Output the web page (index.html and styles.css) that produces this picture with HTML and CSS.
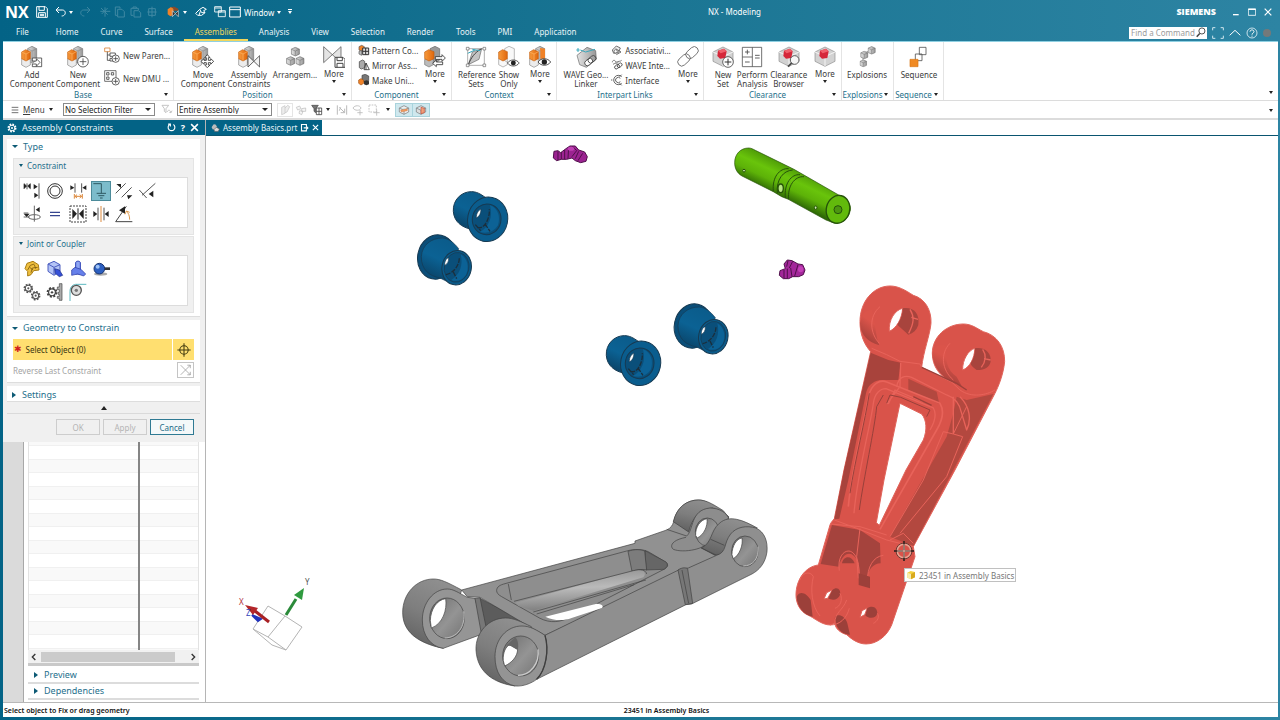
FILE: index.html
```html
<!DOCTYPE html>
<html lang="en">
<head>
<meta charset="utf-8">
<title>NX - Modeling</title>
<link rel="stylesheet" href="styles.css">
</head>
<body>
<svg class="defs" aria-hidden="true">
  <defs>
    <linearGradient id="gOrange" x1="0" x2="1"><stop offset="0" stop-color="#f79a3c"/><stop offset="1" stop-color="#e0670c"/></linearGradient>
    <linearGradient id="gGrey" x1="0" x2="1"><stop offset="0" stop-color="#e4e4e4"/><stop offset="1" stop-color="#969696"/></linearGradient>
    <symbol id="cubes" viewBox="0 0 66 66">
      <path d="M20 8 33 1 47 8V42L34 52 20 44Z" fill="url(#gGrey)" stroke="#777" stroke-width="2"/>
      <path d="M20 8 33 15 47 8M33 15V50" fill="none" stroke="#888" stroke-width="2"/>
      <path d="M2 38 14 32 28 38V57L15 64 2 57Z" fill="#ececec" stroke="#888" stroke-width="2"/>
      <path d="M2 18 14 11 28 17V38L15 45 2 38Z" fill="url(#gOrange)" stroke="#c45f10" stroke-width="2"/>
      <path d="M2 18 15 24 28 17M15 24V44" fill="none" stroke="#ffb767" stroke-width="2"/>
    </symbol>
    <symbol id="redcube" viewBox="0 0 66 66">
      <path d="M3 18 33 3 63 18V46L33 61 3 46Z" fill="#d2d2d2" stroke="#8b8b8b" stroke-width="2"/>
      <path d="M3 18 33 32 63 18M33 32V60" fill="none" stroke="#f4f4f4" stroke-width="3"/>
      <path d="M18 14 36 8 44 16 40 36 24 38 16 30Z" fill="#d5273a"/><path d="M18 14 36 8 44 16 26 22Z" fill="#f0606c"/>
    </symbol>
    <symbol id="i-add" viewBox="0 0 66 66"><use href="#cubes" width="66" height="66"/><path d="M34 36H62V62H34V54H46V61L57 49 46 38V45H34Z" fill="#fff" stroke="#444" stroke-width="2.5"/></symbol>
    <symbol id="i-new" viewBox="0 0 66 66"><use href="#cubes" width="66" height="66"/><circle cx="48" cy="47" r="16" fill="#fff" stroke="#444" stroke-width="2.5"/><path d="M48 37V57M38 47H58" stroke="#444" stroke-width="2.5"/></symbol>
    <symbol id="i-move" viewBox="0 0 66 66"><use href="#cubes" width="66" height="66"/><path d="M46 26 54 35H49V43H56V38L65 46 56 55V50H49V57H54L46 65 38 57H43V50H36V55L27 46 36 38V43H43V35H38Z" fill="#fff" stroke="#333" stroke-width="2.5"/></symbol>
    <symbol id="i-con" viewBox="0 0 66 66"><use href="#cubes" width="66" height="66"/><path d="M30 29V63L65 29V63Z" fill="#f2f2f2" stroke="#444" stroke-width="2.5"/></symbol>
    <symbol id="hexc" viewBox="0 0 30 32"><path d="M2 8 15 2 28 8V24L15 30 2 24Z" fill="url(#gGrey)" stroke="#666" stroke-width="2"/><path d="M2 8 15 14 28 8M15 14V29" fill="none" stroke="#777" stroke-width="2"/></symbol>
    <symbol id="i-arr" viewBox="0 0 66 66"><use href="#hexc" x="20" y="2" width="28" height="30"/><use href="#hexc" x="6" y="30" width="28" height="30"/><use href="#hexc" x="34" y="30" width="28" height="30"/></symbol>
    <symbol id="i-bow" viewBox="0 0 66 66"><path d="M2 2V50L54 2V50Z" fill="#e4e4e4" stroke="#666" stroke-width="2.5"/><path d="M36 34H60L66 40V64H36Z" fill="#fff" stroke="#444" stroke-width="3"/><path d="M42 34V44H58V34M42 64V52H60V64" fill="none" stroke="#444" stroke-width="3"/></symbol>
    <symbol id="i-swap" viewBox="0 0 66 66"><path d="M18 8 33 1 47 8V42L34 52 20 44Z" fill="#9a9a9a" stroke="#666" stroke-width="2"/><path d="M2 40 14 34 28 40V56L15 63 2 56Z" fill="#bbb" stroke="#777" stroke-width="2"/><path d="M2 18 14 11 30 17V38L15 45 2 38Z" fill="url(#gOrange)" stroke="#c45f10" stroke-width="2"/><path d="M64 36 54 26V32H34V40H54V46ZM26 52 37 42V48H56V56H37V62Z" fill="#fff" stroke="#333" stroke-width="2.5"/></symbol>
    <symbol id="i-ref" viewBox="0 0 66 66"><path d="M10 56 22 18 50 8 42 40Z" fill="#c4c4c4" stroke="#666" stroke-width="2"/><path d="M10 56C18 36 28 20 50 8" fill="none" stroke="#444" stroke-width="3"/><path d="M8 8H58V58H8Z" fill="none" stroke="#888" stroke-width="2"/><path d="M4 4h8v8H4zM54 4h8v8h-8zM4 54h8v8H4zM54 54h8v8h-8z" fill="#fff" stroke="#666" stroke-width="2"/><path d="M8 22 30 12M22 10 46 14" stroke="#3aa9bd" stroke-width="3"/></symbol>
    <symbol id="eye" viewBox="0 0 40 28"><path d="M1 14C10 1 30 1 39 14 30 27 10 27 1 14Z" fill="#fff" stroke="#333" stroke-width="2.5"/><circle cx="20" cy="14" r="8" fill="#222"/></symbol>
    <symbol id="i-show" viewBox="0 0 66 66"><path d="M20 8 33 1 49 8V42L34 52 20 44ZM2 38 14 32 28 38V56L15 63 2 56Z" fill="#f8f8f8" stroke="#999" stroke-width="2"/><path d="M2 18 14 11 28 17V38L15 45 2 38Z" fill="url(#gOrange)" stroke="#c45f10" stroke-width="2"/><use href="#eye" x="26" y="38" width="40" height="26"/></symbol>
    <symbol id="i-more2" viewBox="0 0 66 66"><use href="#cubes" width="66" height="66"/><path d="M33 6 48 8V38L34 38V15Z" fill="#f08228"/><use href="#eye" x="26" y="34" width="40" height="28"/></symbol>
    <symbol id="i-wave" viewBox="0 0 66 66"><path d="M6 28 36 4 62 14 64 40 34 64 14 56Z" fill="url(#gGrey)" stroke="#666" stroke-width="2"/><path d="M4 12H14M9 6V18M16 12 32 18 60 10" fill="none" stroke="#3aa9bd" stroke-width="3"/><rect x="28" y="40" width="26" height="16" rx="8" transform="rotate(-40 41 48)" fill="#fff" stroke="#444" stroke-width="2.5"/><rect x="38" y="32" width="26" height="16" rx="8" transform="rotate(-40 51 40)" fill="none" stroke="#444" stroke-width="2.5"/></symbol>
    <symbol id="i-link" viewBox="0 0 66 66"><rect x="0" y="30" width="42" height="24" rx="12" transform="rotate(-42 21 42)" fill="none" stroke="#666" stroke-width="2.5"/><rect x="24" y="8" width="42" height="24" rx="12" transform="rotate(-42 45 20)" fill="none" stroke="#666" stroke-width="2.5"/></symbol>
    <symbol id="i-nset" viewBox="0 0 66 66"><use href="#redcube" width="66" height="66"/><circle cx="48" cy="48" r="16" fill="#fff" stroke="#444" stroke-width="2.5"/><path d="M48 38V58M38 48H58" stroke="#333" stroke-width="3"/></symbol>
    <symbol id="i-perf" viewBox="0 0 66 66"><path d="M4 4H62V62H4ZM34 4V62M4 33H34" fill="#fff" stroke="#555" stroke-width="2.5"/><path d="M12 18H26M19 11V25M12 48H26M42 28H56M42 36H56" stroke="#444" stroke-width="2.5"/></symbol>
    <symbol id="i-clr" viewBox="0 0 66 66"><use href="#redcube" width="66" height="66"/><circle cx="50" cy="42" r="13" fill="#f6f6f6" stroke="#444" stroke-width="2.5"/><path d="M41 51 30 62" stroke="#444" stroke-width="5"/></symbol>
    <symbol id="i-exp" viewBox="0 0 66 66"><path d="M46 10 22 24 20 52" fill="none" stroke="#777" stroke-width="2"/><use href="#hexc" x="34" y="0" width="26" height="26"/><use href="#hexc" x="12" y="14" width="26" height="26"/><use href="#hexc" x="10" y="40" width="24" height="24"/></symbol>
    <symbol id="i-seq" viewBox="0 0 66 66"><path d="M34 4H54V26H34ZM22 24H42V44H22Z" fill="#fff" stroke="#555" stroke-width="2.5"/><path d="M6 40H30V62H6Z" fill="#f08a24" stroke="#d8730f" stroke-width="2"/></symbol>
    <symbol id="s-par" viewBox="0 0 48 48"><path d="M2 3H18V14H2Z" fill="#fff" stroke="#d98239" stroke-width="2.5"/><path d="M10 14V40H18M10 24H18M18 18H34V28H18ZM18 34H28V42H18Z" fill="none" stroke="#444" stroke-width="2.5"/><circle cx="35" cy="35" r="11" fill="#fff" stroke="#444" stroke-width="2.5"/><path d="M35 28V42M28 35H42" stroke="#444" stroke-width="2.5"/></symbol>
    <symbol id="s-dmu" viewBox="0 0 48 48"><path d="M2 2H36V34H2Z" fill="#fff" stroke="#555" stroke-width="2.5"/><path d="M8 8H15V15H8ZM22 8H29V15H22ZM8 21H15V28H8Z" fill="none" stroke="#444" stroke-width="2.5"/><circle cx="35" cy="34" r="11" fill="#fff" stroke="#444" stroke-width="2.5"/><path d="M35 27V41M28 34H42" stroke="#444" stroke-width="2.5"/></symbol>
    <symbol id="s-pat" viewBox="0 0 36 36"><path d="M3 8 11 4 19 8V18L11 22 3 18Z" fill="#f08228" stroke="#555" stroke-width="2"/><path d="M3 22 11 19V34L3 30Z" fill="#bbb" stroke="#555" stroke-width="2"/><path d="M14 12H32V32H14ZM23 12V32M14 22H32" fill="#ddd" stroke="#333" stroke-width="3"/></symbol>
    <symbol id="s-mir" viewBox="0 0 36 36"><path d="M4 8 14 3 20 7V26L10 30 4 26Z" fill="#aaa" stroke="#555" stroke-width="2.5"/><path d="M18 32 24 12 34 32ZM24 12V32" fill="#fff" stroke="#333" stroke-width="2.5"/></symbol>
    <symbol id="s-uni" viewBox="0 0 36 36"><path d="M12 4 22 1 32 6V20L22 24 12 20Z" fill="#777" stroke="#444" stroke-width="2"/><path d="M2 18 9 14 17 18V28L9 33 2 28Z" fill="#f08228" stroke="#a35310" stroke-width="2"/><path d="M18 22 25 19 33 22V31L25 34 18 31Z" fill="#333"/></symbol>
    <symbol id="s-ass" viewBox="0 0 36 36"><path d="M4 18 16 6 28 12 22 26 8 28ZM14 14 30 24M16 32 30 24" fill="#eee" stroke="#555" stroke-width="2.5"/><circle cx="14" cy="22" r="5" fill="#fff" stroke="#444" stroke-width="2"/></symbol>
    <symbol id="s-wav" viewBox="0 0 36 36"><path d="M4 10C4 2 14 2 14 10 22 6 28 8 32 4M6 16C10 12 18 14 22 10" fill="none" stroke="#666" stroke-width="2.5"/><rect x="10" y="18" width="16" height="10" rx="5" transform="rotate(-40 18 23)" fill="#fff" stroke="#444" stroke-width="2.5"/><rect x="18" y="14" width="16" height="10" rx="5" transform="rotate(-40 26 19)" fill="none" stroke="#444" stroke-width="2.5"/></symbol>
    <symbol id="s-int" viewBox="0 0 36 36"><path d="M32 8A14 14 0 1 0 32 28M28 13A8 8 0 1 0 28 23" fill="none" stroke="#444" stroke-width="2.5"/><path d="M26 8 32 2M26 28 32 34M4 18H0" stroke="#444" stroke-width="2.5"/></symbol>
    <symbol id="gear" viewBox="0 0 30 30"><circle cx="15" cy="15" r="11" fill="none" stroke="currentColor" stroke-width="5" stroke-dasharray="5 3.6"/><circle cx="15" cy="15" r="8.5" fill="none" stroke="currentColor" stroke-width="3"/><circle cx="15" cy="15" r="3" fill="currentColor"/></symbol>
    <linearGradient id="gWall" x1="0" x2="1" y1="0" y2="1"><stop offset="0" stop-color="#6c6c6c"/><stop offset=".55" stop-color="#949494"/><stop offset="1" stop-color="#747474"/></linearGradient>
    <linearGradient id="gSide" x1=".6" x2=".2" y1="0" y2="1"><stop offset="0" stop-color="#8f8f8f"/><stop offset=".5" stop-color="#7e7e7e"/><stop offset="1" stop-color="#5f5f5f"/></linearGradient>
    <linearGradient id="gFillet" x1="0" x2=".15" y1="0" y2="1"><stop offset="0" stop-color="#8c8c8c"/><stop offset=".5" stop-color="#bababa"/><stop offset="1" stop-color="#808080"/></linearGradient>
    <linearGradient id="gGreen" gradientUnits="userSpaceOnUse" x1="200" y1="75" x2="160" y2="160"><stop offset="0" stop-color="#4f9c08"/><stop offset=".35" stop-color="#69c40b"/><stop offset=".65" stop-color="#5db208"/><stop offset="1" stop-color="#2f6a05"/></linearGradient>
    <linearGradient id="gBlue" x1=".7" x2=".3" y1="0" y2="1"><stop offset="0" stop-color="#0b5b8a"/><stop offset=".5" stop-color="#0b6294"/><stop offset="1" stop-color="#0a4063"/></linearGradient>
    <linearGradient id="gRedSide" x1=".6" x2=".2" y1="0" y2="1"><stop offset=".3" stop-color="#db544a"/><stop offset="1" stop-color="#963b36"/></linearGradient>
    <g id="bushFront" stroke="#173a52" stroke-width="3">
      <path d="M190 214C188 180 214 155 244 155 258 155 270 160 288 174L244 268C215 262 192 245 190 214Z" fill="url(#gBlue)"/>
      <ellipse cx="293" cy="238" rx="60" ry="67" transform="rotate(12 293 238)" fill="#0a5d8e"/>
      <ellipse cx="290" cy="238" rx="43" ry="46" transform="rotate(12 290 238)" fill="#0a4f7a"/>
      <path d="M300 196C325 204 332 232 324 256 312 276 290 282 270 276 296 262 310 232 300 196Z" fill="#0c6296" stroke="none"/>
      <path d="M259 234C258 220 268 208 273 208 273 220 268 230 259 234Z" fill="#fff" stroke-width="2"/>
      <path d="M262 262C280 270 300 240 298 208M285 252 300 274M256 254 272 272" fill="none" stroke="#1b2f3d" stroke-width="4" stroke-dasharray="14 4"/>
    </g>
    <g id="bushBack" stroke="#173a52" stroke-width="3">
      <ellipse cx="140" cy="351" rx="57" ry="67" transform="rotate(12 140 351)" fill="#0a4e79"/>
      <path d="M94 350C96 315 124 294 158 294 176 296 190 306 206 326L170 424 150 414C118 408 94 390 94 350Z" fill="url(#gBlue)" stroke-width="2"/>
      <ellipse cx="200" cy="383" rx="44" ry="52" transform="rotate(12 200 383)" fill="#0a5b8b"/>
      <ellipse cx="200" cy="382" rx="37" ry="45" transform="rotate(12 200 382)" fill="#0a4f7a" stroke-width="2"/>
      <path d="M212 343C234 356 238 384 228 404 216 422 200 426 184 420 210 404 220 374 212 343Z" fill="#0c6296" stroke="none"/>
      <path d="M164 376C163 364 170 353 176 353 177 364 172 373 164 376Z" fill="#fff" stroke-width="2"/>
      <path d="M168 404C188 400 208 380 208 352M190 396 200 416" fill="none" stroke="#1b2f3d" stroke-width="4" stroke-dasharray="14 4"/>
    </g>
  </defs>
</svg>

<div class="app">
  <header class="titlebar">
    <strong class="logo">NX</strong>
    <div class="quick">
      <button aria-label="Save" class="qb q-save"><svg viewBox="0 0 36 36"><path d="M2 2H28L34 8V34H2ZM9 2V13H25V2M8 34V20H28V34M12 25H24M12 29H24" fill="none" stroke="#fff" stroke-width="3"/></svg></button>
      <button aria-label="Undo" class="qb q-undo"><svg viewBox="0 0 36 36"><path d="M12 3 3 12 12 21M4 12H22C34 12 34 30 20 30" fill="none" stroke="#fff" stroke-width="3"/></svg></button>
      <i class="tri light"></i>
      <button aria-label="Redo" class="qb q-redo dim"><svg viewBox="0 0 36 36"><path d="M24 3 33 12 24 21M32 12H14C2 12 2 30 16 30" fill="none" stroke="#fff" stroke-width="3"/></svg></button>
      <button aria-label="Cut" class="qb q-cut dim"><svg viewBox="0 0 36 36"><path d="M6 6 26 26M26 6 8 24M4 16H34M18 4V32" fill="none" stroke="#fff" stroke-width="3"/></svg></button>
      <button aria-label="Copy" class="qb dim"><svg viewBox="0 0 36 36"><path d="M4 3H18V8M4 3V28H10M11 10H24L31 17V33H11Z" fill="none" stroke="#fff" stroke-width="3"/></svg></button>
      <button aria-label="Paste" class="qb dim"><svg viewBox="0 0 36 36"><path d="M10 28H3V7H25V12M9 7V3H19V7M12 14H25L32 20V33H12Z" fill="none" stroke="#fff" stroke-width="3"/></svg></button>
      <button aria-label="Repeat" class="qb dim"><svg viewBox="0 0 36 36"><path d="M18 2V34M4 18H32M8 8H28V28H8Z" fill="none" stroke="#fff" stroke-width="3"/></svg></button>
      <button aria-label="Component" class="qb q-comp"><svg viewBox="0 0 36 36"><path d="M2 10 12 3 20 8V26L10 31 2 25Z" fill="#f08228"/><path d="M12 3 22 2 34 8V14H20V8Z" fill="#8a4a2a"/><path d="M16 14V32L25 23 34 32V14L25 23Z" fill="#333" stroke="#ddd" stroke-width="2"/></svg></button>
      <i class="tri light"></i>
      <button aria-label="Touch" class="qb q-touch"><svg viewBox="0 0 36 36"><path d="M2 22 14 10 24 4 34 10 26 14 30 20 20 28 8 28ZM14 10 20 20 30 20M12 28 16 16" fill="none" stroke="#fff" stroke-width="3"/></svg></button>
      <button aria-label="Cascade" class="qb q-cas"><svg viewBox="0 0 36 36"><path d="M2 2H22V18H2ZM2 6H22M13 14H34V32H13ZM13 18H34" fill="#12708f" stroke="#fff" stroke-width="2.5"/></svg></button>
      <button class="qb q-win"><svg viewBox="0 0 36 36"><path d="M2 3H34V33H2ZM2 11H34" fill="none" stroke="#fff" stroke-width="3"/></svg>Window <i class="tri light"></i></button>
      <i class="tri light bar"></i>
    </div>
    <h1 class="apptitle">NX - Modeling</h1>
    <div class="winctl">
      <strong class="siemens">SIEMENS</strong>
      <button aria-label="Minimize"><svg viewBox="0 0 24 24"><path d="M3 20H20" stroke="#fff" stroke-width="4"/></svg></button>
      <button aria-label="Maximize"><svg viewBox="0 0 24 24"><path d="M1 3H23V22H1Z" fill="none" stroke="#fff" stroke-width="2.5"/><path d="M1 4H23" stroke="#fff" stroke-width="4"/></svg></button>
      <button aria-label="Close"><svg viewBox="0 0 24 24"><path d="M2 2 22 22M22 2 2 22" stroke="#fff" stroke-width="3.5"/></svg></button>
    </div>
  </header>

  <div class="tabrow">
    <nav class="tabs">
      <button class="file">File</button><button>Home</button><button>Curve</button><button>Surface</button><button class="on">Assemblies</button><button>Analysis</button><button>View</button><button>Selection</button><button>Render</button><button>Tools</button><button>PMI</button><button>Application</button>
    </nav>
    <div class="find">
      <label class="search"><input type="text" placeholder="Find a Command" aria-label="Find a Command"><svg viewBox="0 0 36 36"><circle cx="21" cy="13" r="10" fill="#fff" stroke="#444" stroke-width="3"/><path d="M14 21 4 32" stroke="#444" stroke-width="5"/></svg></label>
      <button aria-label="Full screen"><svg viewBox="0 0 36 36"><path d="M2 10V2H10M26 2H34V10M34 26V34H26M10 34H2V26" fill="none" stroke="#cfe6ee" stroke-width="3"/></svg></button>
      <button aria-label="Minimize ribbon"><svg viewBox="0 0 36 36"><path d="M2 25 18 10 34 25" fill="none" stroke="#fff" stroke-width="3"/></svg></button>
      <button aria-label="Help"><svg viewBox="0 0 36 36"><circle cx="18" cy="18" r="15" fill="none" stroke="#e6f2f6" stroke-width="2.5"/><path d="M12 14C12 7 24 7 24 14 24 18 18 18 18 23M18 26V29" fill="none" stroke="#fff" stroke-width="3"/></svg></button>
      <i class="dot"></i>
    </div>
  </div>

  <section class="ribbon">
    <div class="group g-base">
      <div class="items">
        <button class="big w46"><svg><use href="#i-add"/></svg>Add<br>Component</button>
        <button class="big w46"><svg><use href="#i-new"/></svg>New<br>Component</button>
        <div class="list two"><button><svg><use href="#s-par"/></svg>New Paren...</button><button><svg><use href="#s-dmu"/></svg>New DMU ...</button></div>
      </div>
      <footer>Base<i class="tri corner"></i></footer>
    </div>
    <div class="group g-pos">
      <div class="items">
        <button class="big w46"><svg><use href="#i-move"/></svg>Move<br>Component</button>
        <button class="big w46"><svg><use href="#i-con"/></svg>Assembly<br>Constraints</button>
        <button class="big w46"><svg><use href="#i-arr"/></svg>Arrangem...</button>
        <button class="big more w32"><svg><use href="#i-bow"/></svg>More<i class="tri"></i></button>
      </div>
      <footer>Position<i class="tri corner"></i></footer>
    </div>
    <div class="group g-comp">
      <div class="items">
        <div class="list"><button><svg><use href="#s-pat"/></svg>Pattern Co...</button><button><svg><use href="#s-mir"/></svg>Mirror Ass...</button><button><svg><use href="#s-uni"/></svg>Make Uni...</button></div>
        <button class="big more w32"><svg><use href="#i-swap"/></svg>More<i class="tri"></i></button>
      </div>
      <footer>Component<i class="tri corner"></i></footer>
    </div>
    <div class="group g-ctx">
      <div class="items">
        <button class="big w36"><svg><use href="#i-ref"/></svg>Reference<br>Sets</button>
        <button class="big w30"><svg><use href="#i-show"/></svg>Show<br>Only</button>
        <button class="big more w32"><svg><use href="#i-more2"/></svg>More<i class="tri"></i></button>
      </div>
      <footer>Context<i class="tri corner"></i></footer>
    </div>
    <div class="group g-link">
      <div class="items">
        <button class="big w46"><svg><use href="#i-wave"/></svg>WAVE Geo...<br>Linker</button>
        <div class="list"><button><svg><use href="#s-ass"/></svg>Associativi...</button><button><svg><use href="#s-wav"/></svg>WAVE Inte...</button><button><svg><use href="#s-int"/></svg>Interface</button></div>
        <button class="big more w30"><svg><use href="#i-link"/></svg>More<i class="tri"></i></button>
      </div>
      <footer>Interpart Links<i class="tri corner"></i></footer>
    </div>
    <div class="group g-clr">
      <div class="items">
        <button class="big w26"><svg><use href="#i-nset"/></svg>New<br>Set</button>
        <button class="big w32"><svg><use href="#i-perf"/></svg>Perform<br>Analysis</button>
        <button class="big w40"><svg><use href="#i-clr"/></svg>Clearance<br>Browser</button>
        <button class="big more w32"><svg><use href="#redcube"/></svg>More<i class="tri"></i></button>
      </div>
      <footer>Clearance<i class="tri corner"></i></footer>
    </div>
    <div class="group g-exp">
      <div class="items"><button class="big w46"><svg><use href="#i-exp"/></svg>Explosions</button></div>
      <footer>Explosions<i class="tri corner"></i></footer>
    </div>
    <div class="group g-seq">
      <div class="items"><button class="big w46"><svg><use href="#i-seq"/></svg>Sequence</button></div>
      <footer>Sequence<i class="tri corner"></i></footer>
    </div>
    <i class="tri endtri"></i>
  </section>

  <section class="filterbar">
    <button class="menu"><svg viewBox="0 0 24 24"><path d="M2 4H22M2 12H22M2 20H22" stroke="#555" stroke-width="2.5"/></svg><span><u>M</u>enu</span><i class="tri"></i></button>
    <span class="sel s1"><select aria-label="Selection filter"><option>No Selection Filter</option></select><i class="tri"></i></span>
    <svg class="fi dimg" viewBox="0 0 36 36"><path d="M3 4H23L15 14V26L10 22V14ZM18 24C22 16 28 18 30 26M30 26 25 25M30 26 33 20" fill="none" stroke="#777" stroke-width="2.5"/></svg>
    <span class="sel s2"><select aria-label="Selection scope"><option>Entire Assembly</option></select><i class="tri"></i></span>
    <div class="ficons">
      <svg class="fi boxed dimg" viewBox="0 0 36 36"><path d="M8 10 18 5V28L8 32ZM18 12 26 4 32 8 24 24 18 26" fill="#ddd" stroke="#888" stroke-width="2"/></svg>
      <svg class="fi dimg" viewBox="0 0 36 36"><path d="M4 10 14 6 18 14 8 18ZM20 14 32 12 32 22 20 22ZM14 20 24 22 20 32 12 28Z" fill="#eee" stroke="#777" stroke-width="2"/></svg>
      <svg class="fi" viewBox="0 0 36 36"><path d="M2 4H22L14 14V26L9 22V14Z" fill="#777" stroke="#444" stroke-width="2"/><path d="M16 12H32V32H16ZM24 12V32M16 22H32" fill="#fff" stroke="#444" stroke-width="2.5"/></svg>
      <i class="tri gap"></i>
      <svg class="fi dimg" viewBox="0 0 36 36"><path d="M4 4V32M32 4V32M10 10 26 26M26 14V26H14M10 20 14 10" fill="none" stroke="#777" stroke-width="3"/></svg>
      <svg class="fi dimg" viewBox="0 0 36 36"><path d="M3 12C8 3 24 3 27 12 24 21 8 21 3 12ZM24 18V34M16 26H32" fill="none" stroke="#777" stroke-width="2.5"/></svg>
      <svg class="fi dimg" viewBox="0 0 36 36"><path d="M3 3H25V24H3Z" fill="none" stroke="#777" stroke-width="2.5" stroke-dasharray="5 3"/><path d="M26 17V35M17 26H35" stroke="#777" stroke-width="2.5"/></svg>
      <i class="tri wide"></i>
      <span class="tog"><svg viewBox="0 0 36 36"><path d="M4 12 18 5 32 12V24L18 31 4 24ZM4 12 18 19 32 12M18 19V31" fill="#eee" stroke="#777" stroke-width="2"/><path d="M8 18 28 14V20L10 24Z" fill="#f09a60" stroke="#c9703a"/></svg></span>
      <span class="tog"><svg viewBox="0 0 36 36"><path d="M4 12 18 5 32 12V24L18 31 4 24ZM4 12 18 19 32 12M18 19V31" fill="#ddd" stroke="#777" stroke-width="2"/><path d="M18 10 28 13V26L18 29Z" fill="#f0a07a" stroke="#c9503a" stroke-width="2"/></svg></span>
    </div>
    <i class="tri endtri"></i>
  </section>

  <main class="work">
    <aside class="side">
      <section class="dialog">
        <header><svg class="gearw"><use href="#gear"/></svg><h2>Assembly Constraints</h2>
          <button aria-label="Reset"><svg viewBox="0 0 24 24"><path d="M7 4A9 9 0 1 0 17 4M3 3H9V9" fill="none" stroke="#fff" stroke-width="3"/></svg></button>
          <button aria-label="Help" class="q">?</button>
          <button aria-label="Close"><svg viewBox="0 0 24 24"><path d="M3 3 21 21M21 3 3 21" stroke="#fff" stroke-width="4"/></svg></button>
        </header>
        <div class="card type">
          <h3><i class="tri"></i>Type</h3>
          <div class="sub">
            <h4><i class="tri"></i>Constraint</h4>
            <div class="palette">
              <button aria-label="Touch Align"><svg viewBox="0 0 54 54"><path d="M3 5 11 12 3 20ZM22 5 14 12 22 20Z" fill="#222" stroke="#222" stroke-width="2"/><path d="M12 4V22M48 4V50" stroke="#555" stroke-width="3"/><path d="M32 6 44 14 32 22ZM34 32 46 40 34 48Z" fill="#222"/></svg></button>
              <button aria-label="Concentric"><svg viewBox="0 0 54 54"><circle cx="27" cy="27" r="22" fill="none" stroke="#333" stroke-width="3"/><circle cx="27" cy="27" r="15" fill="none" stroke="#333" stroke-width="3"/></svg></button>
              <button aria-label="Distance"><svg viewBox="0 0 54 54"><path d="M18 4V32M38 4V32" stroke="#555" stroke-width="3"/><path d="M4 10 16 17 4 24ZM52 10 40 17 52 24Z" fill="#222"/><path d="M16 36V50M40 36V50M18 43H38M24 38 18 43 24 48M32 38 38 43 32 48" fill="none" stroke="#dd8a3e" stroke-width="3"/></svg></button>
              <button aria-label="Fix" class="on"><svg viewBox="0 0 54 54"><path d="M4 5H28V34M14 34H42M19 41H37M24 48H32" fill="none" stroke="#2f5963" stroke-width="3"/></svg></button>
              <button aria-label="Parallel"><svg viewBox="0 0 54 54"><path d="M2 34 32 4M20 46 50 16" stroke="#555" stroke-width="3"/><path d="M4 6H18V18ZM36 40H52L40 52Z" fill="#222"/></svg></button>
              <button aria-label="Perpendicular"><svg viewBox="0 0 54 54"><path d="M4 24 26 48M12 40 52 4" stroke="#555" stroke-width="3"/><path d="M46 26V46L32 36Z" fill="#222"/></svg></button>
              <button aria-label="Align"><svg viewBox="0 0 54 54"><path d="M34 2V50M2 24H16M2 36H20" stroke="#666" stroke-width="3"/><ellipse cx="34" cy="36" rx="18" ry="7" fill="none" stroke="#666" stroke-width="3"/><path d="M50 6V22L38 14ZM2 26H20L11 36Z" fill="#222"/></svg></button>
              <button aria-label="Fit"><svg viewBox="0 0 54 54"><path d="M12 22H42M12 32H42" stroke="#35458f" stroke-width="4"/></svg></button>
              <button aria-label="Bond"><svg viewBox="0 0 54 54"><path d="M3 3H51V51H3Z" fill="none" stroke="#444" stroke-width="3" stroke-dasharray="6 3"/><path d="M10 12 24 26 10 42ZM44 12 30 26 44 42Z" fill="#222"/><path d="M27 10V44" stroke="#222" stroke-width="3"/></svg></button>
              <button aria-label="Center"><svg viewBox="0 0 54 54"><path d="M18 8V46M36 8V46" stroke="#555" stroke-width="3"/><path d="M27 3V51" stroke="#dd8a3e" stroke-width="3"/><path d="M4 18 16 27 4 36ZM50 18 38 27 50 36Z" fill="#222"/></svg></button>
              <button aria-label="Angle"><svg viewBox="0 0 54 54"><path d="M2 50 34 4M2 50H52" stroke="#444" stroke-width="3"/><path d="M12 16 30 4V26Z" fill="#222"/><path d="M44 44C44 32 40 24 34 18M30 28 34 18 44 22" fill="none" stroke="#dd9a4e" stroke-width="3"/></svg></button>
            </div>
          </div>
          <div class="sub">
            <h4><i class="tri"></i>Joint or Coupler</h4>
            <div class="palette">
              <button aria-label="Hinge"><svg viewBox="0 0 54 54"><path d="M6 26 12 10 30 4 46 14 48 30 32 32 24 44 14 48 14 34Z" fill="#f0c040" stroke="#a87c12" stroke-width="3"/><path d="M14 30 22 16 34 12M24 38 28 24 44 22M20 22 30 30M34 14 38 26" fill="none" stroke="#7c5c10" stroke-width="2.5"/></svg></button>
              <button aria-label="Slider"><svg viewBox="0 0 54 54"><path d="M6 12 24 4 42 14V34L24 46 6 34Z" fill="#b4c4f6" stroke="#4a5cc0" stroke-width="3"/><path d="M6 12 24 22 42 14M24 22V44" fill="none" stroke="#4a5cc0" stroke-width="3"/><path d="M26 26 40 30 50 46 40 50 28 40Z" fill="#3550d8" stroke="#1b2b80" stroke-width="2"/></svg></button>
              <button aria-label="Cylindrical"><svg viewBox="0 0 54 54"><path d="M20 8C20 2 34 2 34 8V42H20Z" fill="#8ea5f2" stroke="#2b3fb5" stroke-width="3"/><path d="M8 30 18 22 36 28 50 42 44 48 26 42 8 46Z" fill="#6680ea" stroke="#2334a0" stroke-width="2"/></svg></button>
              <button aria-label="Ball"><svg viewBox="0 0 54 54"><path d="M30 22H54V30H30Z" fill="#333"/><ellipse cx="26" cy="42" rx="20" ry="5" fill="#aaa"/><circle cx="22" cy="26" r="16" fill="#2c5fc0" stroke="#19346f" stroke-width="3"/><circle cx="17" cy="20" r="6" fill="#9fc3f6"/></svg></button>
              <i class="brk"></i>
              <button aria-label="Gear"><svg viewBox="0 0 54 54" color="#555"><use href="#gear" x="0" y="0" width="32" height="32"/><use href="#gear" x="22" y="22" width="32" height="32"/></svg></button>
              <button aria-label="Rack and Pinion"><svg viewBox="0 0 54 54" color="#444"><use href="#gear" x="0" y="10" width="36" height="36"/><path d="M40 2H48V52H40V46H34V40H40V34H36V28H40V20H34V12H40Z" fill="#aaa" stroke="#444" stroke-width="2"/></svg></button>
              <button aria-label="Cable"><svg viewBox="0 0 54 54"><path d="M52 4H20C8 6 3 14 3 26V54" fill="none" stroke="#5cb8c0" stroke-width="3"/><circle cx="22" cy="22" r="15" fill="#ddd" stroke="#555" stroke-width="4"/><circle cx="22" cy="22" r="5" fill="#777"/></svg></button>
            </div>
          </div>
        </div>
        <div class="card geo">
          <h3><i class="tri"></i>Geometry to Constrain</h3>
          <div class="pick"><span class="what"><b>✱</b>Select Object (0)</span><button aria-label="Select Object"><svg viewBox="0 0 40 40"><circle cx="20" cy="20" r="12" fill="none" stroke="#443c10" stroke-width="3"/><path d="M20 1V39M1 20H39" stroke="#443c10" stroke-width="3"/></svg></button></div>
          <div class="rev"><span>Reverse Last Constraint</span><button aria-label="Reverse Last Constraint" disabled><svg viewBox="0 0 40 40"><path d="M4 4 36 36M36 4 4 36M26 4H36V14M26 36H36V26" fill="none" stroke="#999" stroke-width="2.5"/></svg></button></div>
        </div>
        <div class="card set"><h3><i class="tri right"></i>Settings</h3></div>
        <div class="collapse"><i class="tri up"></i></div>
        <footer><button disabled>OK</button><button disabled>Apply</button><button class="ok">Cancel</button></footer>
      </section>
      <section class="nav">
        <div class="rail"></div>
        <div class="navbody">
          <div class="tree"><div class="colA"></div><div class="colB"></div></div>
          <div class="hscroll"><svg viewBox="0 0 24 24"><path d="M16 3 7 12 16 21" fill="none" stroke="#333" stroke-width="4"/></svg><div class="track"><div class="thumb"></div></div><svg viewBox="0 0 24 24"><path d="M8 3 17 12 8 21" fill="none" stroke="#333" stroke-width="4"/></svg></div>
          <h3 class="fold"><i class="tri right"></i>Preview</h3>
          <h3 class="fold"><i class="tri right"></i>Dependencies</h3>
        </div>
      </section>
    </aside>

    <section class="graphics">
      <div class="doctabs"><button class="doctab"><svg viewBox="0 0 30 30"><path d="M2 14 8 5 14 4 20 12 14 22 6 22Z" fill="#bbb"/><path d="M10 22 18 14 28 20 24 28 12 28Z" fill="#ddd" stroke="#555" stroke-width="2"/></svg><span>Assembly Basics.prt</span><svg class="pg" viewBox="0 0 24 24"><path d="M17 9V4H4V21H17V17M10 13H21M17 9 21 13 17 17" fill="none" stroke="#fff" stroke-width="3"/></svg><svg class="x" viewBox="0 0 24 24"><path d="M3 3 21 21M21 3 3 21" stroke="#fff" stroke-width="4"/></svg></button></div>
      <div class="canvas">
        <svg class="scene" viewBox="206 136 1072 566" preserveAspectRatio="xMinYMin meet">
          <!-- bushings -->
          <g transform="translate(390 140) scale(.3333)">
            <use href="#bushFront"/><use href="#bushFront" x="459" y="432"/>
            <use href="#bushBack"/><use href="#bushBack" x="770" y="207"/>
            <!-- elbow grease fitting -->
            <g fill="#9c2391" stroke="#4f104a" stroke-width="3">
              <path d="M492 34 504 32 512 38 528 26 540 18 556 18 566 30 584 36 592 50 588 64 572 68 556 62 546 54 530 58 514 58 500 62 490 54Z"/>
              <path d="M504 34V60M514 36V58M524 30V58M536 22 534 56M548 20 560 32 546 50M566 34 556 56M578 40 564 62" fill="none"/>
              <ellipse cx="543" cy="26" rx="10" ry="6" fill="#c040b4" stroke="none"/>
            </g>
          </g>
          <!-- pin and second fitting -->
          <g transform="translate(720 140) scale(.3333)" stroke="#26520a" stroke-width="2">
            <path d="M44 68C44 42 62 24 86 24 94 24 100 28 106 31L222 88 356 165C384 172 396 200 390 214 386 236 366 252 344 250L318 240 205 178 185 170 160 155 66 108C52 100 44 86 44 68Z" fill="url(#gGreen)"/>
            <path d="M206 86C178 84 156 112 160 154M218 90C190 92 168 118 172 160M240 104C214 102 192 130 196 174M252 110C224 108 202 138 206 178" fill="none" stroke-width="3"/>
            <ellipse cx="354" cy="208" rx="35" ry="42" transform="rotate(14 354 208)" fill="#62ba0c" stroke-width="4"/>
            <circle cx="354" cy="209" r="12" fill="#4c9610" stroke-width="3"/>
            <ellipse cx="182" cy="145" rx="8" ry="13" fill="#b7e682" stroke-width="4"/><circle cx="72" cy="92" r="4" fill="#cfeeb0" stroke-width="3"/><ellipse cx="287" cy="203" rx="4" ry="5" fill="#cfeeb0" stroke-width="3"/>
            <g fill="#a3279a" stroke="#4f104a" stroke-width="3">
              <path d="M192 372 202 360 216 362 234 372 248 374 255 390 250 404 236 410 218 410 206 416 190 416 178 406 180 392 196 386Z"/>
              <path d="M192 390V414M202 386V414M212 384 216 410M204 362 200 380M218 364 208 384M234 374 224 408" fill="none"/>
              <ellipse cx="242" cy="388" rx="8" ry="9" fill="#c440b8" stroke="none"/>
            </g>
          </g>
          <!-- fixed arm -->
          <g transform="translate(390 490) scale(.3333)" stroke="#3f3f3f" stroke-width="2" stroke-linejoin="round">
            <path d="M270 325 425 405 300 470 280 420Z" fill="#5c5c5c"/>
            <path d="M38 368C38 310 80 267 130 267 152 267 170 276 215 300L160 475C110 465 38 440 38 368Z" fill="url(#gSide)"/>
            <path d="M172 297C190 297 205 308 232 322L255 325 282 420 272 434 160 475C122 470 97 436 97 390 97 340 130 297 172 297Z" fill="#959595"/>
            <path d="M255 325 270 323 288 410 274 430Z" fill="#777"/>
            <ellipse cx="171" cy="385" rx="52" ry="61" fill="url(#gWall)"/>
            <path d="M121 392C122 358 140 330 167 326 172 360 158 402 124 414Z" fill="#fff"/>
            <path d="M215 300 735 160V153L830 120C856 108 848 88 862 66 876 42 900 30 925 30 946 30 962 40 1016 80L1000 192 895 236 465 436 410 405 270 322 232 320Z" fill="#919191"/>
            <path d="M850 95C860 52 890 30 925 30 946 30 962 38 1000 62L1016 82 968 54C930 56 906 84 896 126Z" fill="url(#gSide)"/>
            <path d="M830 118 890 138C912 120 900 60 960 54 990 54 1010 70 1016 84L960 150C950 178 880 190 850 178 838 168 846 150 888 142" fill="#8d8d8d"/>
            <ellipse cx="952" cy="126" rx="36" ry="42" fill="url(#gWall)"/>
            <path d="M917 136C916 112 930 90 951 86 954 108 942 134 922 144Z" fill="#fff"/>
            <path d="M934 174C968 158 960 124 988 100 1004 86 1022 84 1040 88 1060 92 1080 102 1102 114L1002 192 975 196Z" fill="url(#gSide)"/>
            <path d="M934 174 980 196M962 148 1003 166" fill="none"/>
            <path d="M465 436 870 238 895 234 980 196C1012 186 1000 160 1022 132 1040 110 1070 106 1098 114 1124 126 1134 154 1131 186 1126 220 1108 240 1086 252L905 342 888 344 440 568C466 540 474 480 465 436Z" fill="#8f8f8f"/>
            <path d="M864 240C880 230 888 234 893 236L908 340 886 344Z" fill="#777"/><path d="M876 240 896 340" fill="none"/>
            <ellipse cx="1065" cy="184" rx="40" ry="46" fill="url(#gWall)"/>
            <path d="M1026 194C1026 168 1040 146 1056 144 1060 166 1048 196 1030 206Z" fill="#fff"/>
            <path d="M320 302C320 290 330 285 345 281L710 183C735 176 760 178 775 185L825 215C836 222 836 230 822 238L545 380C510 398 480 400 450 385L335 320C324 314 320 308 320 302Z" fill="#8e8e8e"/>
            <path d="M765 182 828 216C836 224 832 232 822 238L768 240Z" fill="#666"/>
            <path d="M714 184C735 177 750 178 764 183L770 240C756 236 740 240 726 244Z" fill="#7c7c7c"/>
            <path d="M376 338 730 242C760 234 772 248 760 262L430 362 385 348Z" fill="url(#gFillet)" stroke="none"/>
            <path d="M372 334 730 242C752 236 768 240 770 252M430 366 768 270M440 372 732 284M355 282 364 330" fill="none"/>
            <path d="M466 380 620 341C636 342 642 348 636 354L545 384C520 394 490 392 466 380Z" fill="#fff" stroke="none"/>
            <path d="M258 480C256 428 296 384 346 384 370 384 392 394 424 410L375 588C318 580 262 552 258 480Z" fill="url(#gSide)"/>
            <path d="M315 500C315 448 350 408 396 408 420 408 440 420 465 436 478 480 468 540 440 568 424 580 400 590 375 588 336 580 315 546 315 500Z" fill="#949494"/>
            <path d="M465 436C478 480 468 540 440 568" fill="none" stroke-width="4"/>
            <ellipse cx="392" cy="498" rx="54" ry="60" fill="url(#gWall)"/>
            <path d="M340 512C338 488 348 468 360 464L383 478C382 500 366 518 344 528Z" fill="#fff"/><path d="M350 466 376 442C386 452 386 470 383 480L362 468Z" fill="#666" stroke="none"/>
            <path d="M444 478C450 520 420 556 384 556" fill="none" stroke="#ccc" stroke-width="4"/>
            <path d="M221 364C228 410 200 444 164 444M1104 170C1108 206 1088 228 1060 228" fill="none" stroke="#bbb" stroke-width="3"/>
          </g>
          <!-- arm highlighted for selection -->
          <g transform="translate(780 280) scale(.3333)" fill="none" stroke="#e8635a" stroke-width="3" stroke-linejoin="round">
            <path fill="#d9534a" fill-rule="evenodd" stroke="#e0635a" d="M240 125C240 65 280 18 330 18 355 18 375 30 400 46 435 56 455 90 453 130 450 165 430 215 425 262L515 306C480 290 457 260 457 220 457 170 500 132 550 132 575 132 590 145 610 155 650 165 675 200 674 245 670 285 655 320 645 340L525 570 400 800 405 830 335 1035C320 1070 290 1092 258 1092 235 1092 215 1078 200 1064 180 1058 165 1045 165 1030L150 1035C125 1035 100 1012 85 1006 60 995 48 970 48 945 48 900 75 860 115 855L150 735C152 728 158 722 163 716L192 570 272 215C250 190 240 160 240 125ZM360 370 312 600 289 728 298 736 378 570 430 480C442 450 440 420 425 402ZM328 154C325 120 345 90 368 85 366 115 350 145 328 154ZM548 270C547 240 565 210 585 205 583 235 570 262 548 270ZM132 957 140 938 157 930 143 955ZM240 1012 246 992 262 984 254 1004Z"/>
            <path d="M272 218 325 240 362 248 355 300 300 300C275 305 262 320 258 340L205 600 178 716 163 718 192 570Z" fill="#a8433c" stroke="none"/>
            <path d="M240 130C242 165 262 185 298 196 286 170 290 140 275 90 262 88 246 100 240 130Z" fill="url(#gRedSide)" stroke="none"/>
            <path d="M298 190C270 160 265 110 300 80M275 205 320 224 360 244 420 252 425 262" stroke-width="3"/>
            <path d="M457 222C460 265 490 300 545 318L530 290C500 270 495 235 500 200 480 190 460 200 457 222Z" fill="url(#gRedSide)" stroke="none"/>
            <path d="M520 300C485 270 480 220 510 190M515 306 540 330C575 355 620 345 645 330" stroke-width="3"/>
            <path d="M368 85C400 80 420 100 415 135 410 150 400 160 385 164 370 150 358 140 352 134 364 118 368 100 368 85ZM585 205C615 200 635 220 632 245 628 260 618 270 590 270 578 262 572 256 572 250 582 236 585 220 585 205Z" fill="#a8443d" stroke="none"/>
            <path d="M390 88C404 110 402 130 386 160M394 112 414 118M608 208C620 226 616 246 604 262M612 236 632 240" stroke-width="4"/>
            <path d="M385 296 470 335 478 372 385 330ZM530 350 560 360 640 342 400 798 330 770 500 470 520 400Z" fill="#b3483f" stroke="none"/>
            <path d="M560 380 520 462 548 470 500 590 360 760M520 462 490 455 430 600 330 770" stroke-width="3"/>
            <path d="M205 680C215 560 260 400 265 350 275 310 300 298 320 306L480 370C492 390 488 420 470 450L300 748" stroke-width="5"/>
            <path d="M222 700C232 580 275 420 280 370 284 340 300 326 318 326L460 384C470 400 465 424 450 450M350 320 C355 290 375 285 395 292L500 345C530 355 540 375 545 400L560 450C575 420 570 380 540 350M362 248 360 320 320 372M520 350 520 460M325 372 345 330 430 366" stroke-width="4"/>
            <path d="M238 690C250 600 285 440 290 380L310 345M320 370 330 345 362 352 450 390 440 410M268 340C256 420 225 540 210 640" stroke="#98403a" stroke-width="3"/>
            <path d="M425 262 530 310 560 330M400 350 455 376" stroke="#9d403a" stroke-width="4"/>
            <path d="M156 735 240 750 300 790 302 850 C280 850 262 870 262 900L240 890 236 850C220 810 190 810 176 860L122 852Z" fill="#a5433d" stroke="none"/>
            <path d="M178 872C170 820 205 800 222 822 236 836 238 870 238 895M262 905C262 860 280 830 310 826M163 720 230 745 320 780 400 800M240 745 230 830 235 895M150 732 240 740 320 765M330 780 370 760 400 790" stroke-width="3"/>
            <path d="M186 850C190 828 214 824 224 850ZM236 880 270 890 270 925 236 915ZM50 950C52 980 70 1004 98 1010L92 960C80 940 60 930 50 950ZM165 1020C170 1050 190 1064 210 1064L202 1030C194 1000 160 1000 165 1020Z" fill="#9c403a" stroke="none"/>
            <path d="M157 930C172 918 184 930 180 945 174 958 160 964 145 955ZM262 984C280 974 292 984 292 1000 288 1016 268 1018 256 1006Z" fill="#9c403a" stroke="none"/>
            <path d="M60 900C64 880 90 870 100 890 90 930 96 980 120 1008M150 1035C180 1035 200 1015 208 985M165 1030C162 1000 190 990 200 960" stroke-width="3"/>
            <path d="M180 940C190 960 180 980 165 985M292 1000C300 1010 292 1025 280 1030" stroke-width="3"/>
          </g>
          <!-- cursor -->
          <g fill="none"><circle cx="904" cy="551" r="7" stroke="#e9a08f" stroke-width="2"/><circle cx="904" cy="551" r="8" stroke="#6d3a33"/><path d="M904 541V561M894 551H914" stroke="#4a2a26" stroke-width="2"/><path d="M904 544V558M897 551H911" stroke="#f0c0b0"/></g>
          <!-- view triad -->
          <g fill="none" stroke="#b4b4b4"><path d="M268 606 285 616 302 627 286 650 268 637 253 629ZM285 616 268 637M253 629 272 645 286 650"/></g>
          <path d="M286 615 296 599" stroke="#2b8a3a" stroke-width="3"/><path d="M304 588 302 600 294 595Z" fill="#2f9a3f"/>
          <path d="M252 615 261 619 258 621Z" fill="#2233bb" stroke="#2233bb" stroke-width="2"/>
          <path d="M269 622 255 611" stroke="#a82024" stroke-width="3"/><path d="M245 605 258 608 253 615Z" fill="#b3262a"/>
          <text x="305" y="585" class="ax" fill="#555">Y</text><text x="239" y="605" class="ax" fill="#b03040">X</text><text x="246" y="616" class="ax" fill="#3344bb">Z</text>
        </svg>
        <div class="tip" role="tooltip"><svg viewBox="0 0 30 30"><path d="M4 8 14 3 27 6V22L16 28 4 23Z" fill="#f3d23e"/><path d="M4 8 15 12V27L4 23Z" fill="#f7ecb0"/><path d="M15 12 27 6V22L15 27Z" fill="#d8a91c"/></svg>23451 in Assembly Basics</div>
      </div>
    </section>
  </main>
  <footer class="status"><span>Select object to Fix or drag geometry</span><span class="mid">23451 in Assembly Basics</span><span></span></footer>
</div>
</body>
</html>
```

FILE: styles.css
```css
* { box-sizing: border-box; }
body { margin: 0; font: 8px/9px "Noto Sans", "Open Sans", sans-serif; color: #3c3c3c; }
button, input, select { font: inherit; color: inherit; margin: 0; padding: 0; border: 0; background: none; }
button { white-space: nowrap; }
h1, h2, h3, h4 { margin: 0; font-weight: 400; }
svg { display: block; }
.defs { position: absolute; width: 0; height: 0; }
.app { display: flex; flex-direction: column; min-height: 100vh; padding: 0 2px 3px 3px; background: linear-gradient(90deg, #036386 0%, #1a7593 50%, #2d84a3 100%); }

.tri { display: inline-block; flex: none; width: 0; height: 0; border: 2px solid transparent; border-top: 3px solid #222; border-bottom: 0; }
.tri.light { border-top-color: #fff; }
.tri.up { border: 3px solid transparent; border-bottom: 4px solid #222; border-top: 0; }
.tri.right { border: 3px solid transparent; border-left: 4px solid #0d5a75; border-right: 0; }

.titlebar { display: grid; grid-template-columns: 1fr auto 1fr; grid-template-areas: "q t w"; align-items: center; height: 24px; color: #fff; }
.logo { grid-area: q; padding-left: 2px; font: 700 16px/20px "Open Sans", sans-serif; }
.quick { grid-area: q; display: flex; align-items: center; padding-left: 33px; }
.qb { display: flex; align-items: center; justify-content: center; gap: 2px; width: 16px; }
.qb svg { width: 12px; height: 12px; }
.qb.dim { opacity: .22; }
.q-save { width: 12px; }
.q-undo { margin-left: 5px; }
.q-redo { margin-left: 2px; width: 20px; }
.q-cut { margin-left: 3px; width: 14px; }
.q-comp { margin-left: 3px; width: 20px; }
.q-touch { margin-left: 4px; width: 20px; }
.q-cas { width: 18px; }
.qb.q-win { width: auto; margin-right: 7px; gap: 3px; }
.bar { position: relative; }
.bar::before { content: ""; position: absolute; left: -2px; top: -5px; width: 4px; height: 1px; background: #fff; }
.apptitle { grid-area: t; font-size: 8px; line-height: 12px; padding-left: 188px; }
.winctl { grid-area: w; display: flex; justify-content: flex-end; align-items: center; gap: 8px; padding-right: 6px; }
.winctl svg { width: 8px; height: 8px; }
.siemens { font: 800 9px/10px "Open Sans", sans-serif; margin-right: 8px; }

.tabrow { display: flex; justify-content: space-between; align-items: stretch; height: 17px; color: #e8f3f7; }
.tabs { display: flex; }
.tabs button { padding: 0 11px; border-bottom: 2px solid transparent; }
.tabs .file { padding: 0 16px 0 13px; }
.tabs .on { color: #f1d65c; border-bottom-color: #f1d65c; }
.find { display: flex; align-items: center; gap: 5px; padding-right: 7px; }
.find button svg { width: 12px; height: 12px; }
.search { display: flex; align-items: center; width: 78px; height: 12px; background: #fff; }
.search input { flex: 1; width: 40px; padding-left: 2px; outline: 0; color: #444; }
.search input::placeholder { color: #9b9b9b; opacity: 1; }
.search svg { width: 12px; height: 11px; }
.dot { width: 8px; height: 8px; border-radius: 50%; background: #75797a; }

.ribbon { position: relative; display: flex; align-items: stretch; height: 60px; background: #fff; border-top: 1px solid #8fd0e2; border-bottom: 1px solid #dcdcdc; }
.group { display: flex; flex-direction: column; justify-content: space-between; padding-top: 2px; border-right: 1px solid #e4e4e4; }
.items { display: flex; align-items: flex-start; padding-left: 6px; }
.big { line-height: 9px; text-align: center; padding-top: 2px; }
.big svg { width: 22px; height: 22px; margin: 0 auto 2px; }
.big.more svg { margin-bottom: 1px; }
.big .tri { display: block; margin: 2px auto 0; }
.w46 { width: 46px; } .w40 { width: 40px; } .w36 { width: 36px; } .w32 { width: 32px; } .w30 { width: 30px; } .w26 { width: 26px; }
.list { display: flex; flex-direction: column; gap: 3px; }
.list button { display: flex; align-items: center; gap: 2px; height: 12px; }
.list svg { width: 12px; height: 12px; }
.list.two { gap: 7px; padding: 3px 0 0 3px; }
.list.two button { height: 16px; gap: 3px; }
.list.two svg { width: 16px; height: 16px; }
.group footer { position: relative; text-align: center; color: #256f8a; line-height: 10px; padding-right: 10px; }
.corner { position: absolute; right: 5px; top: 3px; }
.g-base { width: 171px; } .g-pos { width: 178px; } .g-comp { width: 100px; } .g-ctx { width: 105px; }
.g-link { width: 147px; } .g-clr { width: 138px; } .g-exp { width: 52px; } .g-seq { width: 50px; }
.g-comp .items, .g-link .items, .g-clr .items { justify-content: space-between; }
.g-exp .items, .g-seq .items { padding-left: 2px; }
.endtri { position: absolute; right: 5px; bottom: 6px; }

.filterbar { position: relative; display: flex; align-items: center; height: 19px; background: #fff; border-bottom: 2px solid #dcdcdc; padding-left: 8px; }
.menu { display: flex; align-items: center; gap: 4px; width: 52px; }
.menu svg { width: 8px; height: 8px; }
.sel { position: relative; display: block; height: 13px; border: 1px solid #8a8a8a; }
.sel select { appearance: none; width: 100%; height: 11px; padding-left: 1px; display: block; color: #222; outline: 0; }
.sel .tri { position: absolute; right: 3px; top: 4px; border-width: 3px 3px 0; }
.s1 { width: 92px; } .s2 { width: 95px; }
.fi { width: 14px; height: 12px; flex: none; }
.filterbar > .fi { margin: 0 3px 0 5px; }
.dimg { opacity: .5; }
.ficons { display: flex; align-items: center; padding-left: 6px; gap: 2px; }
.boxed { outline: 1px solid #ccc; }
.gap { margin-right: 3px; }
.wide { margin: 0 3px; }
.tog { display: block; background: #cfe8ee; border: 1px solid #a9d3dc; margin-right: -3px; padding: 0 2px; }
.tog svg { width: 12px; height: 12px; }

.work { flex: 1; display: flex; background: #fff; }
.side { display: flex; flex-direction: column; width: 203px; border-right: 1px solid #b5b5b5; }
.dialog { background: #f0f0f0; padding-bottom: 7px; }
.dialog > header { display: flex; align-items: center; gap: 5px; height: 15px; padding: 0 6px 0 4px; background: #036386; color: #fff; font-size: 9px; line-height: 12px; }
.dialog > header h2 { flex: 1; font-size: 9px; line-height: 12px; color: #e4f1f5; }
.dialog > header svg { width: 9px; height: 9px; }
.dialog > header .q { font-weight: 700; }
.dialog > header .gearw { width: 10px; height: 10px; }
.card { background: #fff; margin: 0 5px 3px 4px; border-bottom: 1px solid #ddd; padding: 0 6px; }
.card h3, .fold { display: flex; align-items: center; gap: 5px; color: #246f8c; font-size: 9px; line-height: 12px; }
.card h3 { height: 14px; }
.card .tri, .fold .tri { border-top-color: #0d5a75; }
.card .tri { border-width: 3px 3px 0; }
.card .tri.right, .fold .tri.right { border-color: transparent transparent transparent #0d5a75; border-width: 3px 0 3px 4px; margin-right: 1px; }
.type { margin-top: 4px; padding-bottom: 2px; }
.type h3 { height: 19px; padding-bottom: 4px; }
.type h3, .geo h3, .set h3 { margin-left: -1px; }
.sub { background: #f0f0f0; border: 1px solid #e4e4e4; padding: 0 5px 6px; margin-bottom: 1px; }
.sub h4 { display: flex; align-items: center; gap: 4px; height: 18px; padding-bottom: 6px; color: #246f8c; }
.sub .tri { border-width: 3px 2px 0; }
.palette { display: flex; flex-wrap: wrap; gap: 3px; padding: 3px 29px 3px 2px; background: #fff; border: 1px solid #dcdcdc; }
.palette button { width: 20px; height: 20px; padding: 1px; }
.palette .on { background: #7cbccb; border: 1px solid #4c8b9a; padding: 0; }
.palette svg { width: 18px; height: 18px; }
.brk { width: 40px; }
.geo { padding-top: 2px; padding-bottom: 4px; }
.geo h3 { height: 17px; padding-bottom: 5px; }
.pick { display: flex; gap: 1px; color: #3a3510; }
.what { flex: 1; display: flex; align-items: center; gap: 4px; padding-left: 1px; height: 21px; background: #ffdf70; }
.what b { color: #d01f1f; font-size: 9px; font-family: "DejaVu Sans", sans-serif; }
.pick button { width: 21px; background: #ffdf70; }
.pick svg { width: 14px; height: 14px; margin: 0 auto; }
.rev { display: flex; justify-content: space-between; align-items: center; color: #a3a3a3; padding-top: 2px; }
.rev button { border: 1px solid #c4c4c4; padding: 1px; }
.rev svg { width: 13px; height: 12px; }
.set { margin-bottom: 0; }
.set h3 { padding-top: 2px; height: 15px; }
.collapse { display: flex; justify-content: center; align-items: center; height: 12px; margin: 0 5px 0 4px; border-bottom: 1px solid #dadada; }
.dialog > footer { display: flex; justify-content: flex-end; gap: 3px; padding: 5px 11px 0 0; }
.dialog > footer button { width: 44px; height: 16px; border: 1px solid #cdcdcd; color: #b4b4b4; background: #f0f0f0; }
.dialog > footer .ok { border-color: #2f7a93; color: #1d6c87; background: #f4f8f9; }

.nav { flex: 1; display: flex; }
.rail { width: 21px; background: #dadada; border-right: 1px solid #a8a8a8; }
.navbody { flex: 1; display: flex; flex-direction: column; padding: 0 6px 2px 4px; }
.tree { flex: 1; display: flex; border: 1px solid #e2e2e2; border-width: 0 1px; background: repeating-linear-gradient(#f9f9f9 0 3px, #f0f0f0 3px 4px, #fff 4px 17px, #f0f0f0 17px 18px, #f9f9f9 18px 27px); }
.colA { width: 111px; border-right: 2px solid #858585; }
.hscroll { display: flex; align-items: center; height: 13px; background: #f1f1f1; padding: 0 2px; }
.hscroll svg { width: 8px; height: 8px; }
.track { flex: 1; padding: 0 14px 0 3px; }
.thumb { height: 10px; background: #cbcbcb; }
.fold { height: 16px; padding-left: 6px; border-bottom: 2px solid #dcdcdc; }
.hscroll + .fold { border-top: 3px solid #c9c9c9; height: 21px; padding-top: 2px; }

.graphics { flex: 1; display: flex; flex-direction: column; }
.doctabs { height: 16px; border-bottom: 1px solid #0a5570; }
.doctab { display: flex; align-items: center; gap: 3px; height: 15px; padding: 0 3px 0 5px; background: #036386; color: #e8f3f7; }
.doctab svg { width: 9px; height: 9px; }
.doctab .x { width: 7px; height: 7px; }
.canvas { position: relative; flex: 1; }
.scene { width: 100%; }
.ax { font-size: 8px; }
.tip { position: absolute; left: 698px; top: 432px; display: flex; align-items: center; gap: 3px; height: 14px; padding: 0 1px; border: 1px solid #c0c0c0; background: #fff; color: #777; white-space: nowrap; }
.tip svg { width: 10px; height: 10px; }

.status { display: grid; grid-template-columns: 1fr auto 1fr; align-items: center; height: 15px; padding-left: 1px; background: #fff; border-top: 1px solid #b8b8b8; color: #111; font-size: 7px; font-weight: 600; }
.status .mid { padding-left: 51px; }
```
